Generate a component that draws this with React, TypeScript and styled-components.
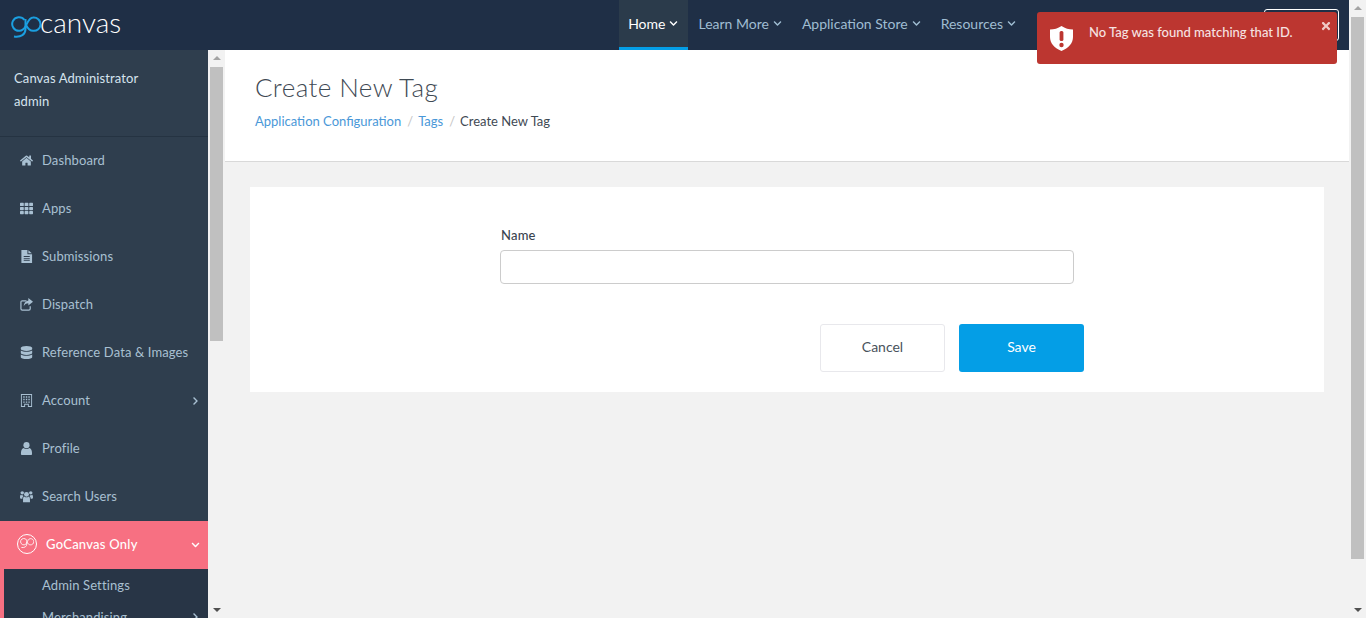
import React from "react";
import styled, { createGlobalStyle } from "styled-components";
import { FaChevronDown, FaChevronRight, FaDatabase, FaHome, FaTh, FaTimes } from "react-icons/fa";

const GlobalStyle = createGlobalStyle`
  html, body {
    margin: 0;
    height: 100%;
    overflow: hidden;
    background: #f2f2f2;
    font-family: "Lato", "Liberation Sans", sans-serif;
  }
  * { box-sizing: border-box; }
`;

const GoMark = ({ size = 30, color = "#1b9fe0", weight = 2 }: { size?: number; color?: string; weight?: number }) => (
  <svg width={size} height={(size * 26) / 30} viewBox="0 0 30 26" fill="none" stroke={color} strokeWidth={weight}>
    <path d="M13.500 6A6.800 6.800 0 1 0 8.500 16.800C11 16.800 13 15 14.500 12.500C16 10 18 3.500 22 3.500A6.700 6.700 0 1 1 22 16.800C19 16.800 16.500 14 15 11" />
    <path d="M14.500 5V15C14.500 20.500 10 23.500 3 22.500" />
  </svg>
);

const ShieldIcon = () => (
  <svg width="23" height="25" viewBox="0 0 23 25">
    <path
      fill="#fff"
      d="M11.500 0C15 2.400 19 3.500 23 3.500V11c0 6.500-4.500 11-11.500 14C4.500 22 0 17.500 0 11V3.500C4 3.500 8 2.400 11.500 0Z"
    />
    <rect x="9.600" y="5" width="3.800" height="10" rx="1.500" fill="#bc3630" />
    <circle cx="11.500" cy="19" r="2.200" fill="#bc3630" />
  </svg>
);

const FileIcon = () => (
  <svg viewBox="0 0 13 14" fill="currentColor">
    <path
      fillRule="evenodd"
      d="M1 0H7.500V4.500H12.500V14H1ZM3.500 6.500V7.500H10V6.500ZM3.500 8.500V9.500H10V8.500ZM3.500 10.500V11.500H10V10.500Z"
    />
    <path d="M8.500 0.200L12.300 3.500H8.500Z" />
  </svg>
);

const ShareIcon = () => (
  <svg viewBox="0 0 14 14" fill="none" stroke="currentColor" strokeWidth="1.300">
    <path d="M7 3H2.500C1.500 3 1 3.500 1 4.500V11.500C1 12.500 1.500 13 2.500 13H9.500C10.500 13 11 12.500 11 11.500V9" />
    <path fill="currentColor" stroke="none" d="M9 0L14 4L9 8V5.600C6.500 5.600 5 6.500 4 9C4 5.500 6 3 9 2.600Z" />
  </svg>
);

const BuildingIcon = () => (
  <svg viewBox="0 0 12 14" fill="currentColor">
    <path
      fillRule="evenodd"
      d="M0 0H12V14H7.500V11.500H4.500V14H0ZM1 1V13H3.500V10.500H8.500V13H11V1ZM2.500 2.500H4V4H2.500ZM5.300 2.500H6.800V4H5.300ZM8 2.500H9.500V4H8ZM2.500 5.200H4V6.700H2.500ZM5.300 5.200H6.800V6.700H5.300ZM8 5.200H9.500V6.700H8ZM2.500 8H4V9.500H2.500ZM5.300 8H6.800V9.500H5.300ZM8 8H9.500V9.500H8Z"
    />
  </svg>
);

const UserIcon = () => (
  <svg viewBox="0 0 13 14" fill="currentColor">
    <circle cx="6.500" cy="3.400" r="3.300" />
    <path d="M1.500 14C0.800 14 0.500 13.600 0.500 13C0.500 9.500 1.300 7 3.300 6.500C4.200 7.300 5.300 7.600 6.500 7.600C7.700 7.600 8.800 7.300 9.700 6.500C11.700 7 12.500 9.500 12.500 13C12.500 13.600 12.200 14 11.500 14Z" />
  </svg>
);

const UsersIcon = () => (
  <svg viewBox="0 0 15 13" fill="currentColor">
    <circle cx="7.500" cy="4" r="2.800" />
    <circle cx="2.600" cy="2.300" r="2" />
    <circle cx="12.400" cy="2.300" r="2" />
    <path d="M3.500 13V10C3.500 8 4 6.800 5 6.500C5.700 7.200 6.500 7.500 7.500 7.500C8.500 7.500 9.300 7.200 10 6.500C11 6.800 11.500 8 11.500 10V13Z" />
    <path d="M0 7.500C0 5.500 0.500 4.500 1 4.500C1.500 5 2 5.200 3 5.200C3.500 5.800 4 6 4 6C3 7 2.700 8 2.700 9H1C0.300 9 0 8.500 0 7.500ZM15 7.500C15 5.500 14.500 4.500 14 4.500C13.500 5 13 5.200 12 5.200C11.500 5.800 11 6 11 6C12 7 12.300 8 12.300 9H14C14.700 9 15 8.500 15 7.500Z" />
  </svg>
);

const navItems = [
  { label: "Dashboard", icon: <FaHome /> },
  { label: "Apps", icon: <FaTh /> },
  { label: "Submissions", icon: <FileIcon /> },
  { label: "Dispatch", icon: <ShareIcon /> },
  { label: "Reference Data & Images", icon: <FaDatabase /> },
  { label: "Account", icon: <BuildingIcon />, more: true },
  { label: "Profile", icon: <UserIcon /> },
  { label: "Search Users", icon: <UsersIcon /> },
];

const topLinks = ["Home", "Learn More", "Application Store", "Resources"];

export default function App() {
  return (
    <Page>
      <GlobalStyle />
      <Viewport>
        <Header>
          <Logo>
            <GoMark />
            <LogoText>canvas</LogoText>
          </Logo>
          <TopNav>
            {topLinks.map((link, i) => (
              <TopLink key={link} $active={i === 0}>
                {link}
                <FaChevronDown />
              </TopLink>
            ))}
          </TopNav>
          <OutlineButton />
        </Header>
        <Body>
          <Sidebar>
            <UserBlock>
              <div>Canvas Administrator</div>
              <div>admin</div>
            </UserBlock>
            {navItems.map((item) => (
              <NavItem key={item.label}>
                <NavIcon>{item.icon}</NavIcon>
                {item.label}
                {item.more && (
                  <Chevron>
                    <FaChevronRight />
                  </Chevron>
                )}
              </NavItem>
            ))}
            <OnlyItem>
              <OnlyBadge>
                <GoMark size={14} color="#fff" weight={1.800} />
              </OnlyBadge>
              GoCanvas Only
              <Chevron>
                <FaChevronDown />
              </Chevron>
            </OnlyItem>
            <SubMenu>
              <SubItem>Admin Settings</SubItem>
              <SubItem>
                Merchandising
                <Chevron>
                  <FaChevronRight />
                </Chevron>
              </SubItem>
            </SubMenu>
          </Sidebar>
          <Scrollbar>
            <Arrow $up />
            <Thumb $height={274} />
            <Arrow />
          </Scrollbar>
          <Main>
            <TitleBar>
              <Title>Create New Tag</Title>
              <Crumbs>
                <CrumbLink>Application Configuration</CrumbLink>
                <Slash>/</Slash>
                <CrumbLink>Tags</CrumbLink>
                <Slash>/</Slash>
                <span>Create New Tag</span>
              </Crumbs>
            </TitleBar>
            <Card>
              <Field>
                <Label>Name</Label>
                <TextInput />
              </Field>
              <Actions>
                <CancelButton>Cancel</CancelButton>
                <SaveButton>Save</SaveButton>
              </Actions>
            </Card>
          </Main>
        </Body>
        <Toast>
          <ShieldIcon />
          <ToastText>No Tag was found matching that ID.</ToastText>
          <ToastClose>
            <FaTimes />
          </ToastClose>
        </Toast>
      </Viewport>
      <Scrollbar>
        <Arrow $up />
        <Thumb $height={542} />
        <Arrow />
      </Scrollbar>
    </Page>
  );
}

const Page = styled.div`
  display: flex;
  width: 100%;
  height: 618px;
  overflow: hidden;
`;
const Viewport = styled.div`
  position: relative;
  flex: 1;
  min-width: 0;
  display: flex;
  flex-direction: column;
`;
const Header = styled.header`
  height: 50px;
  flex: none;
  display: flex;
  align-items: stretch;
  background: #1f2f46;
  padding-left: 11px;
`;
const Logo = styled.div`
  display: flex;
  align-items: center;
  gap: 0;
  padding-top: 4px;
`;
const LogoText = styled.span`
  font-size: 28px;
  font-weight: 300;
  color: #fff;
  margin: -10px 0 0 -1px;
`;
const TopNav = styled.nav`
  display: flex;
  margin-left: auto;
`;
const TopLink = styled.a<{ $active?: boolean }>`
  display: flex;
  align-items: center;
  gap: 4px;
  height: 50px;
  padding: 0 10px 0 ${(p) => (p.$active ? "9px" : "10px")};
  font-size: 14px;
  color: ${(p) => (p.$active ? "#fff" : "#9fbdd2")};
  background: ${(p) => (p.$active ? "#2b3b4b" : "transparent")};
  border-bottom: 3px solid ${(p) => (p.$active ? "#049ee6" : "transparent")};
  svg {
    width: 9px;
    height: 9px;
  }
`;
const OutlineButton = styled.div`
  width: 75px;
  height: 32px;
  margin: 9px 10px 0 238px;
  border: 1px solid #fff;
  border-radius: 3px;
`;
const Body = styled.div`
  flex: 1;
  min-height: 0;
  display: flex;
`;
const Sidebar = styled.aside`
  width: 208px;
  flex: none;
  overflow: hidden;
  background: #2f3e4e;
  font-size: 13px;
  letter-spacing: 0.12px;
  color: #a9c0d2;
`;
const UserBlock = styled.div`
  height: 87px;
  padding: 17px 14px 0;
  line-height: 23px;
  color: #d6e4ee;
  border-bottom: 1px solid #253342;
`;
const NavItem = styled.div`
  position: relative;
  height: 48px;
  padding: 0 0 2px 20px;
  display: flex;
  align-items: center;
`;
const NavIcon = styled.span`
  width: 22px;
  display: flex;
  svg {
    width: 13px;
    height: 13px;
  }
`;
const Chevron = styled.span`
  position: absolute;
  right: 8px;
  top: 50%;
  transform: translateY(-50%);
  display: flex;
  svg {
    width: 9px;
    height: 9px;
  }
`;
const OnlyItem = styled.div`
  position: relative;
  height: 48px;
  padding-bottom: 3px;
  display: flex;
  align-items: center;
  gap: 9px;
  padding-left: 17px;
  background: #f77082;
  color: #fff;
  font-weight: 500;
  letter-spacing: 0.25px;
`;
const OnlyBadge = styled.span`
  width: 20px;
  height: 20px;
  display: flex;
  align-items: center;
  justify-content: center;
  border: 1px solid #fff;
  border-radius: 50%;
`;
const SubMenu = styled.div`
  background: #283546;
  border-left: 4px solid #f77082;
`;
const SubItem = styled.div`
  position: relative;
  height: 32px;
  display: flex;
  align-items: center;
  padding-left: 38px;
`;
const Scrollbar = styled.div`
  width: 17px;
  flex: none;
  display: flex;
  flex-direction: column;
  align-items: center;
  background: #f2f2f2;
`;
const Arrow = styled.span<{ $up?: boolean }>`
  flex: none;
  margin: ${(p) => (p.$up ? "6px 0 7px" : "auto 0 6px")};
  border-left: 4px solid transparent;
  border-right: 4px solid transparent;
  ${(p) => (p.$up ? "border-bottom: 4px solid #a3a3a3;" : "border-top: 4px solid #505050;")}
`;
const Thumb = styled.div<{ $height: number }>`
  width: 13px;
  height: ${(p) => p.$height}px;
  flex: none;
  background: #c0c0c0;
`;
const Main = styled.main`
  flex: 1;
  min-width: 0;
  background: #f2f2f2;
`;
const TitleBar = styled.div`
  height: 112px;
  padding: 20px 30px 0;
  background: #fff;
  border-bottom: 1px solid #d9d9d9;
`;
const Title = styled.h1`
  margin: 0;
  font-size: 26px;
  font-weight: 300;
  line-height: 34px;
  letter-spacing: 0.4px;
  color: #3f4a54;
`;
const Crumbs = styled.div`
  margin-top: 8px;
  display: flex;
  font-size: 13px;
  line-height: 18px;
  color: #3f4a54;
`;
const CrumbLink = styled.a`
  color: #4a98d8;
`;
const Slash = styled.span`
  margin: 0 5px 0 6px;
  color: #c4c4c4;
`;
const Card = styled.section`
  height: 205px;
  margin: 25px 25px 0;
  padding: 40px 250px 0;
  background: #fff;
`;
const Field = styled.div`
  display: flex;
  flex-direction: column;
  gap: 6px;
`;
const Label = styled.label`
  font-size: 13px;
  font-weight: 500;
  line-height: 17px;
  letter-spacing: 0.2px;
  margin-left: 1px;
  color: #3a4450;
`;
const TextInput = styled.input`
  height: 34px;
  width: 574px;
  border: 1px solid #cccccc;
  border-radius: 4px;
  background: #fff;
`;
const Actions = styled.div`
  display: flex;
  justify-content: flex-end;
  gap: 14px;
  margin: 40px -10px 0 0;
`;
const CancelButton = styled.button`
  width: 125px;
  height: 48px;
  padding-bottom: 4px;
  background: #fff;
  border: 1px solid #e8e8ec;
  border-radius: 3px;
  color: #49525c;
  font: 14px "Lato", sans-serif;
`;
const SaveButton = styled.button`
  width: 125px;
  height: 48px;
  padding-bottom: 4px;
  background: #049ee6;
  border: 0;
  border-radius: 3px;
  color: #fff;
  font: 14px "Lato", sans-serif;
`;
const Toast = styled.div`
  position: absolute;
  top: 12px;
  left: 1037px;
  width: 300px;
  height: 52px;
  padding: 14px 0 0 13px;
  display: flex;
  align-items: flex-start;
  background: #bc3630;
  border-radius: 3px;
  color: #f6e3e2;
`;
const ToastText = styled.div`
  margin: -2px 0 0 16px;
  font-size: 13px;
  font-weight: 500;
  line-height: 16px;
`;
const ToastClose = styled.span`
  position: absolute;
  top: 8px;
  right: 5px;
  display: flex;
  color: #f0c9c6;
  svg {
    width: 12px;
    height: 12px;
  }
`;
